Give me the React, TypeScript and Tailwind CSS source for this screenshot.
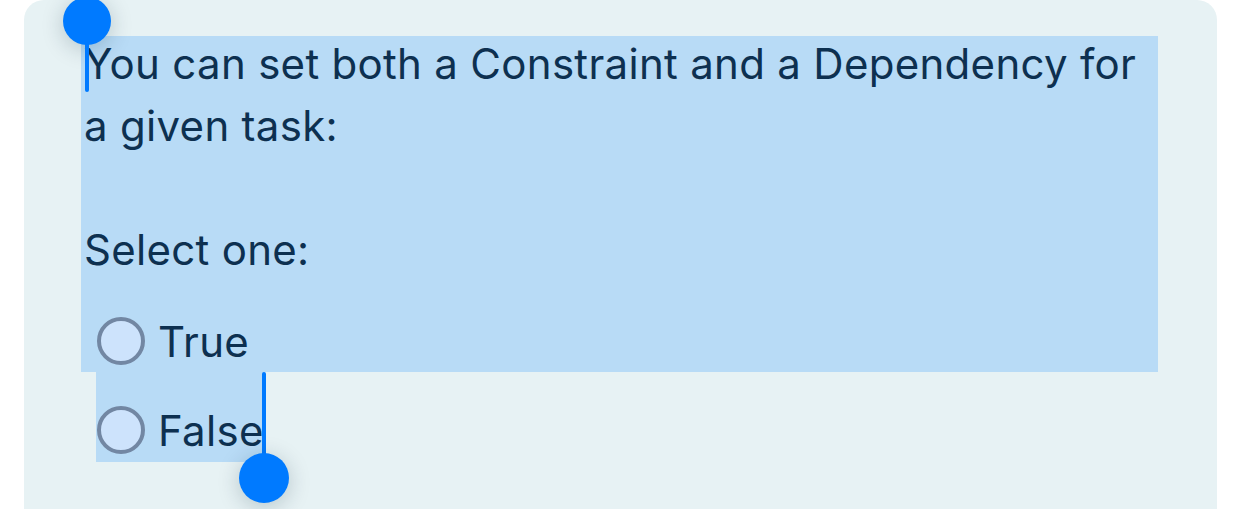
import React from "react";

export default function App() {
  return (
    <div className="relative w-[1242px] h-[509px] overflow-hidden bg-white" style={{ fontFamily: "Inter, 'Noto Sans', sans-serif" }}>
      <div className="ml-[24px] w-[1193px] h-[509px] rounded-t-[20px] bg-[#e7f2f4] pl-[57px] pt-[36px] text-[#0d3050]">
        <div className="flex flex-col w-[1077px] bg-[#b8dbf6]">
          <div className="text-[42px] leading-[62px] tracking-[0.3px] pl-[3px] -mt-[3px] pb-[3px]">
            <div>
              You can set both a Constraint and a Dependency for
              <br />
              a given task:
            </div>
            <div className="h-[62px]" />
            <div>Select one:</div>
          </div>
          <div className="pt-[26px] pl-[16px]">
            <div className="flex items-center h-[62px] gap-[13px]">
              <span className="w-[48px] h-[48px] rounded-full border-[4px] border-[#7287a3] bg-[#cde3fc] shrink-0" />
              <span className="text-[42px] tracking-[0.3px]">True</span>
            </div>
          </div>
        </div>
        <div className="pl-[15px]">
          <div className="inline-flex flex-col bg-[#b8dbf6] pt-[27px] pl-[1px] h-[90px]">
            <div className="flex items-center h-[62px] gap-[13px]">
              <span className="w-[48px] h-[48px] rounded-full border-[4px] border-[#7287a3] bg-[#cde3fc] shrink-0" />
              <span className="text-[42px] tracking-[0.3px]">False</span>
            </div>
          </div>
        </div>
      </div>
      {/* selection handles */}
      <div className="absolute left-[63px] top-[-3px] w-[48px] h-[48px] rounded-full bg-[#007aff] shadow-[0_4px_22px_rgba(0,40,60,0.22)]" />
      <div className="absolute left-[85px] top-[36px] w-[4px] h-[56px] rounded-b-full bg-[#007aff]" />
      <div className="absolute left-[262px] top-[372px] w-[4px] h-[90px] rounded-t-full bg-[#007aff]" />
      <div className="absolute left-[239px] top-[453px] w-[50px] h-[50px] rounded-full bg-[#007aff] shadow-[0_4px_22px_rgba(0,40,60,0.22)]" />
    </div>
  );
}
